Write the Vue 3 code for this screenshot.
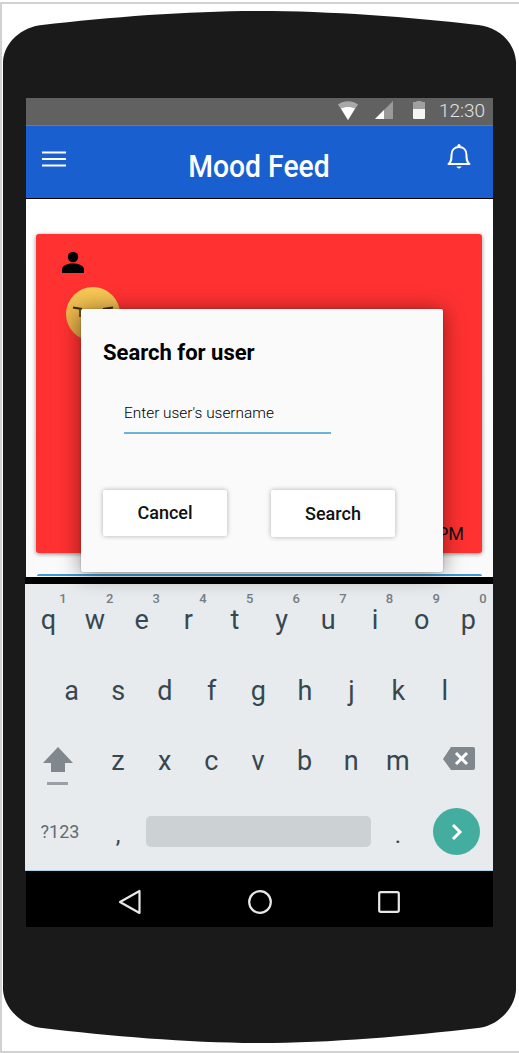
<script setup>
const row1 = [['q','1'],['w','2'],['e','3'],['r','4'],['t','5'],['y','6'],['u','7'],['i','8'],['o','9'],['p','0']]
const row2 = ['a','s','d','f','g','h','j','k','l']
const row3 = ['z','x','c','v','b','n','m']
</script>

<template>
  <div class="page">
    <svg class="body" width="519" height="1053" viewBox="0 0 519 1053" aria-hidden="true">
      <path d="M3 62 C4 42 22 27 42 25 C110 17 190 11 259 11 C330 11 410 17 478 25 C498 27 515 42 516 62 L516 990 C515 1008 498 1026 478 1028 C410 1036 330 1043 259 1043 C190 1043 110 1036 42 1028 C22 1026 4 1008 3 990 Z" fill="#1a1a1a"/>
    </svg>
    <div class="frame">
      <div class="screen">
        <div class="status">
          <svg class="wifi" width="20" height="19" viewBox="0 0 20 19">
            <path d="M0 3.5 C6 -0.8 14 -0.8 20 3.5 L10 19 Z" fill="#a8a8a8"/>
            <path d="M3 7.6 C7 5.4 13 5.4 17 7.6 L10 19 Z" fill="#fff"/>
          </svg>
          <svg class="signal" width="18" height="18" viewBox="0 0 18 18">
            <path d="M18 0 V18 H0 Z" fill="#9a9a9a"/>
            <path d="M9 9 V18 H0 Z" fill="#fff"/>
          </svg>
          <svg class="battery" width="12" height="18" viewBox="0 0 12 18">
            <path d="M3.5 0 H8.5 V1 H12 V8 H0 V1 H3.5 Z" fill="#a0a0a0"/>
            <path d="M0 8 H12 V17 a1 1 0 0 1 -1 1 H1 a1 1 0 0 1 -1 -1 Z" fill="#f5f5f5"/>
          </svg>
          <span class="time">12:30</span>
        </div>
        <header class="appbar">
          <svg class="menu" width="24" height="16" viewBox="0 0 24 16">
            <path d="M0 1.5 H24 M0 8 H24 M0 14.5 H24" stroke="#fff" stroke-width="2" fill="none"/>
          </svg>
          <h1 class="title">Mood Feed</h1>
          <svg class="bell" width="24" height="27" viewBox="0 0 24 27">
            <path d="M1.5 21 C4.5 19 4.5 16 4.5 12 C4.5 7 7.5 4 12 4 C16.5 4 19.5 7 19.5 12 C19.5 16 19.5 19 22.5 21 Z" stroke="#fff" stroke-width="2" stroke-linejoin="round" fill="none"/>
            <circle cx="12" cy="2.6" r="1.6" fill="#fff"/>
            <path d="M9.5 23.6 H14.5 C14 26 10 26 9.5 23.6 Z" fill="#fff"/>
          </svg>
        </header>
        <main class="feed">
          <article class="card">
            <svg class="person" width="22" height="22" viewBox="0 0 22 22">
              <circle cx="11" cy="6" r="5.2" fill="#000"/>
              <path d="M0 22 V18.5 C0 14.5 6 12.6 11 12.6 C16 12.6 22 14.5 22 18.5 V22 Z" fill="#000"/>
            </svg>
            <svg class="emoji" width="54" height="54" viewBox="0 0 54 54">
              <defs>
                <linearGradient id="face" x1="0" y1="0" x2="0" y2="1">
                  <stop offset="0" stop-color="#f8ca55"/>
                  <stop offset="1" stop-color="#dca243"/>
                </linearGradient>
              </defs>
              <circle cx="27" cy="27" r="27" fill="url(#face)"/>
              <path d="M7 20.5 L16 22 M47 20.5 L37 22" stroke="#3a2a10" stroke-width="2" fill="none"/>
              <path d="M14 22 V30" stroke="#6a4a18" stroke-width="1.8" fill="none"/>
            </svg>
            <span class="stamp">PM</span>
          </article>
          <div class="card-next"></div>
          <section class="dialog">
            <h2 class="dialog-title">Search for user</h2>
            <div class="field">Enter user's username</div>
            <div class="actions">
              <button class="btn" type="button">Cancel</button>
              <button class="btn btn-search" type="button">Search</button>
            </div>
          </section>
        </main>
      </div>
      <div class="keyboard">
        <div class="kb-row">
          <div v-for="k in row1" :key="k[0]" class="key">{{ k[0] }}<span class="num">{{ k[1] }}</span></div>
        </div>
        <div class="kb-row kb-row-2">
          <div v-for="k in row2" :key="k" class="key">{{ k }}</div>
        </div>
        <div class="kb-row kb-row-3">
          <div class="shift">
            <svg width="32" height="38" viewBox="0 0 32 38">
              <path d="M16 0 L31 16 H23 V25 H9 V16 H1 Z" fill="#80878d"/>
              <rect x="5" y="35" width="21" height="3" fill="#9aa0a5"/>
            </svg>
          </div>
          <div v-for="k in row3" :key="k" class="key">{{ k }}</div>
          <div class="backspace">
            <svg width="32" height="24" viewBox="0 0 32 24">
              <path d="M8 0 H30 a2 2 0 0 1 2 2 V21 a2 2 0 0 1 -2 2 H8 L0 12 Z" fill="#80878d"/>
              <path d="M13 6 L24 17 M24 6 L13 17" stroke="#fff" stroke-width="3" fill="none"/>
            </svg>
          </div>
        </div>
        <div class="kb-row kb-row-4">
          <div class="k-sym">?123</div>
          <div class="k-comma">,</div>
          <div class="k-space"></div>
          <div class="k-period">.</div>
          <div class="k-enter">
            <svg width="14" height="18" viewBox="0 0 14 18">
              <path d="M3 2 L10 9 L3 16" stroke="#fff" stroke-width="3" fill="none"/>
            </svg>
          </div>
        </div>
      </div>
      <nav class="navbar">
        <svg width="24" height="26" viewBox="0 0 24 26">
          <path d="M21.5 2 V24 L2 13 Z" stroke="#e8e8e8" stroke-width="2.2" stroke-linejoin="round" fill="none"/>
        </svg>
        <svg width="24" height="24" viewBox="0 0 24 24">
          <circle cx="12" cy="12" r="10.8" stroke="#e8e8e8" stroke-width="2.2" fill="none"/>
        </svg>
        <svg width="22" height="22" viewBox="0 0 22 22">
          <rect x="1.2" y="1.2" width="19.6" height="19.6" rx="1.5" stroke="#e8e8e8" stroke-width="2.2" fill="none"/>
        </svg>
      </nav>
    </div>
  </div>
</template>

<style>
html, body { margin: 0; background: #fff; }
</style>

<style scoped>
* { box-sizing: border-box; }
.page {
  position: relative;
  width: 519px;
  height: 1053px;
  overflow: hidden;
  padding-top: 2px;
  background: #fff;
  font-family: Roboto, "Liberation Sans", sans-serif;
}
.body { position: absolute; left: 0; top: 0; }
.frame {
  position: relative;
  height: 1051px;
  padding: 94px 0 0 24px;
  border-top: 2px solid #d2d2d2;
  border-left: 2px solid #d2d2d2;
  border-bottom: 2px solid #d2d2d2;
}
.screen { width: 467px; }
.status {
  display: flex;
  align-items: center;
  height: 28px;
  padding: 0 7px 3px 312px;
  background: #616161;
  border-bottom: 1px solid #737b88;
}
.wifi { margin-right: 17px; }
.signal { margin-right: 20px; }
.battery { margin-right: 14px; }
.time {
  margin-top: 2px;
  font-size: 19px;
  font-weight: 300;
  color: #e4e4e4;
  line-height: 20px;
}
.appbar {
  display: flex;
  align-items: center;
  justify-content: space-between;
  height: 73px;
  padding: 0 22px 8px 16px;
  background: #195fcf;
  border-bottom: 1.5px solid #000;
}
.menu { flex: none; margin-top: 2px; }
.bell { flex: none; margin-bottom: 4px; }
.title {
  margin: 16px 0 0 5px;
  font-size: 32px;
  font-weight: 500;
  color: #fff;
  white-space: nowrap;
  line-height: 36px;
  transform: scaleX(.885);
}
.feed {
  position: relative;
  height: 378px;
  overflow: visible;
  padding: 35px 11px 0 10px;
  background: linear-gradient(#fff 0 40px, #fafafa 100%);
}
.card {
  display: flex;
  flex-direction: column;
  align-items: flex-start;
  height: 319px;
  padding: 17px 18px 9px 26px;
  background: #ff3131;
  border-radius: 3px;
  box-shadow: 0 1px 4px rgba(0, 0, 0, .45);
}
.person { flex: none; }
.emoji { flex: none; margin: 14px 0 0 4px; }
.stamp {
  margin-top: auto;
  align-self: flex-end;
  font-size: 18px;
  line-height: 20px;
  color: #111;
}
.card-next {
  height: 2px;
  margin: 21px 0 0 1px;
  background: #3a9bd6;
  border-radius: 2px 2px 0 0;
}
.dialog {
  position: absolute;
  z-index: 3;
  left: 55px;
  top: 110px;
  display: flex;
  flex-direction: column;
  width: 362px;
  height: 263px;
  padding: 30px 22px 0;
  background: #fafafa;
  border-radius: 2px;
  box-shadow: 0 2px 22px rgba(0, 0, 0, .45), 0 0 2px rgba(0, 0, 0, .3);
}
.dialog-title {
  margin: 0;
  font-size: 22px;
  font-weight: 700;
  line-height: 28px;
  color: #000;
}
.field {
  width: 207px;
  margin: 37px 0 0 21px;
  padding-bottom: 10px;
  font-size: 15.4px;
  font-weight: 300;
  line-height: 18px;
  color: #000;
  border-bottom: 2px solid #6cb2da;
}
.actions {
  display: flex;
  gap: 44px;
  margin-top: 55.5px;
}
.btn {
  width: 124px;
  height: 46px;
  padding: 0;
  border: 0;
  border-radius: 2px;
  background: #fff;
  font: 500 18px Roboto, sans-serif;
  color: #111;
  box-shadow: 0 0 5px rgba(0, 0, 0, .3);
}
.btn-search { height: 47px; padding-top: 1px; }
.keyboard {
  width: 468px;
  margin-left: -1px;
  height: 294px;
  padding-top: 1px;
  background: #e7ebee;
  border-top: 7px solid #000;
  border-bottom: 1px solid #a8d4ea;
  color: #37474f;
}
.kb-row {
  display: flex;
  height: 70.5px;
  align-items: center;
}
.key {
  position: relative;
  width: 46.67px;
  text-align: center;
  font-size: 27px;
  line-height: 40px;
}
.num {
  position: absolute;
  right: 5px;
  top: -9px;
  font-size: 13px;
  font-weight: 500;
  line-height: 16px;
  color: #757d83;
}
.kb-row-2 { padding-left: 23.3px; }
.shift {
  width: 69.7px;
  padding: 10px 0 0 17px;
  display: flex;
}
.backspace {
  display: flex;
  margin-left: 22px;
  margin-top: -4px;
}
.k-sym {
  width: 70px;
  text-align: center;
  font-size: 18px;
  color: #5f6b73;
}
.k-comma, .k-period {
  text-align: center;
  font-size: 24px;
  line-height: 30px;
  color: #37474f;
  padding-top: 6px;
}
.k-comma { width: 46px; }
.k-space {
  width: 225px;
  height: 31px;
  margin-left: 5px;
  border-radius: 5px;
  background: #ccd1d4;
}
.k-period { width: 54px; }
.k-enter {
  display: flex;
  align-items: center;
  justify-content: center;
  width: 47px;
  height: 47px;
  margin-left: 8px;
  border-radius: 50%;
  background: #43ae9f;
}
.navbar {
  display: flex;
  align-items: center;
  justify-content: center;
  gap: 106px;
  width: 467px;
  height: 56px;
  padding: 6px 2px 0 0;
  background: #000;
}
</style>
